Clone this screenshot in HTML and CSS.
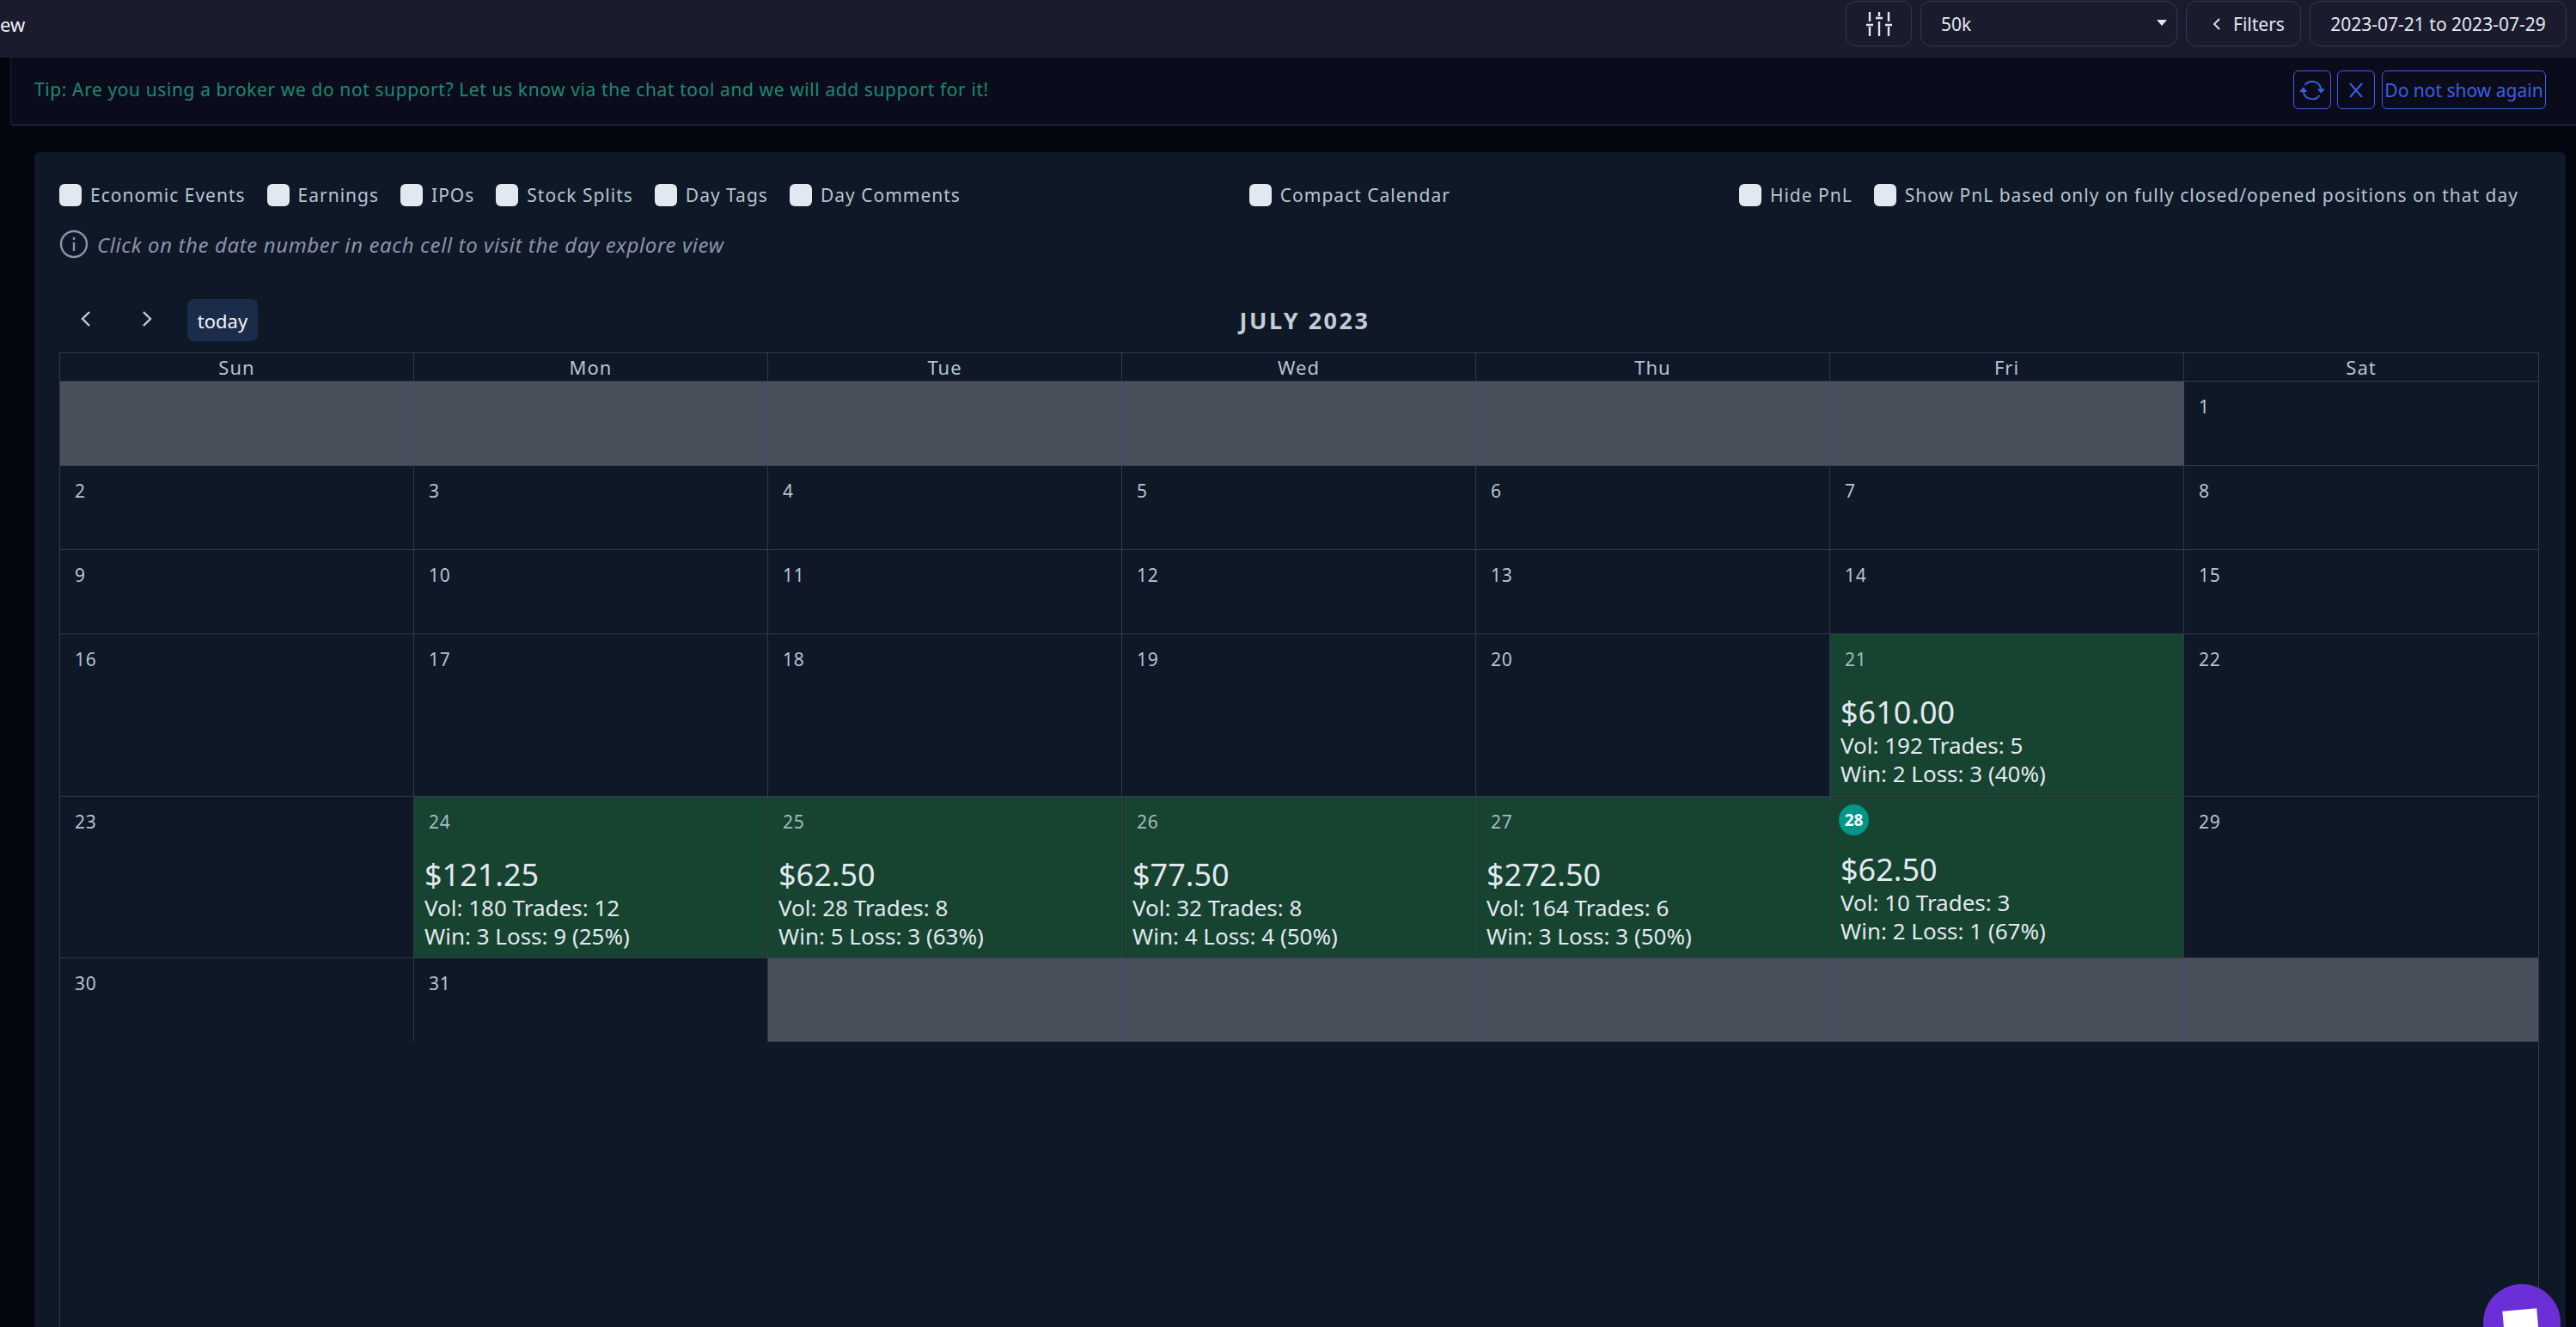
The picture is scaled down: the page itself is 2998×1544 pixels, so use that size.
FILE: index.html
```html
<!DOCTYPE html>
<html lang="en">
<head>
    <meta charset="UTF-8">
    <title>Calendar</title>
    <link rel="stylesheet" href="styles.css">
</head>
<body>
    <header class="topbar">
        <div class="page-title">ew</div>
        <div class="top-actions">
            <button class="top-btn icon-btn">
                <svg width="30" height="30" viewBox="0 0 30 30" fill="none" stroke="#e4e6ee" stroke-width="2.4">
                    <path d="M4 1v11M15 1v5M26 1v11M4 18v11M15 12v17M26 18v11"/>
                    <path d="M0 16h8M11 8h8M22 16h8"/>
                </svg>
            </button>
            <div class="top-btn select-btn"><span>50k</span><span class="caret"></span></div>
            <button class="top-btn filters-btn">
                <svg width="10" height="16" viewBox="0 0 10 16" fill="none" stroke="#e4e6ee" stroke-width="1.8"><path d="M8 2 2 8l6 6"/></svg>
                <span>Filters</span>
            </button>
            <button class="top-btn date-btn">2023-07-21 to 2023-07-29</button>
        </div>
    </header>

    <main class="content">
        <div class="tip">
            <div class="tip-text"><span class="tip-label">Tip:</span> Are you using a broker we do not support? Let us know via the chat tool and we will add support for it!</div>
            <div class="tip-actions">
                <button class="tip-btn square">
                    <svg width="30" height="30" viewBox="0 0 16 16" fill="#3f5fe0">
                        <path d="M11.534 7h3.932a.25.25 0 0 1 .192.41l-1.966 2.36a.25.25 0 0 1-.384 0l-1.966-2.36a.25.25 0 0 1 .192-.41zm-11 2h3.932a.25.25 0 0 0 .192-.41L2.692 6.23a.25.25 0 0 0-.384 0L.342 8.59A.25.25 0 0 0 .534 9z"/>
                        <path fill-rule="evenodd" d="M8 3c-1.552 0-2.94.707-3.857 1.818a.5.5 0 1 1-.771-.636A6.002 6.002 0 0 1 13.917 7H12.9A5.002 5.002 0 0 0 8 3zM3.1 9a5.002 5.002 0 0 0 8.757 2.182.5.5 0 1 1 .771.636A6.002 6.002 0 0 1 2.083 9H3.1z"/>
                    </svg>
                </button>
                <button class="tip-btn square">
                    <svg width="20" height="20" viewBox="0 0 20 20" fill="none" stroke="#3f5fe0" stroke-width="2"><path d="M3 2l14 16M17 2 3 18"/></svg>
                </button>
                <button class="tip-btn wide">Do not show again</button>
            </div>
        </div>

        <section class="card">
            <div class="options">
                <div class="option-group">
                    <label class="option"><span class="check"></span>Economic Events</label>
                    <label class="option"><span class="check"></span>Earnings</label>
                    <label class="option"><span class="check"></span>IPOs</label>
                    <label class="option"><span class="check"></span>Stock Splits</label>
                    <label class="option"><span class="check"></span>Day Tags</label>
                    <label class="option"><span class="check"></span>Day Comments</label>
                </div>
                <div class="option-group">
                    <label class="option"><span class="check"></span>Compact Calendar</label>
                </div>
                <div class="option-group">
                    <label class="option"><span class="check"></span>Hide PnL</label>
                    <label class="option"><span class="check"></span>Show PnL based only on fully closed/opened positions on that day</label>
                </div>
            </div>
            <div class="hint">
                <svg width="34" height="34" viewBox="0 0 34 34" fill="none" stroke="#8b93a9" stroke-width="2.4">
                    <circle cx="17" cy="17" r="15"/>
                    <path d="M17 15v10"/>
                    <path d="M17 9v3"/>
                </svg>
                <span>Click on the date number in each cell to visit the day explore view</span>
            </div>

            <div class="cal-nav">
                <div class="cal-buttons">
                    <button class="nav-btn"><svg width="14" height="20" viewBox="0 0 14 20" fill="none" stroke="#c3cbd6" stroke-width="2.4"><path d="M11 2 3 10l8 8"/></svg></button>
                    <button class="nav-btn"><svg width="14" height="20" viewBox="0 0 14 20" fill="none" stroke="#c3cbd6" stroke-width="2.4"><path d="M3 2l8 8-8 8"/></svg></button>
                    <button class="today-btn">today</button>
                </div>
                <h2 class="cal-title">JULY 2023</h2>
            </div>

            <div class="calendar">
                <div class="cal-grid">
                    <div class="head">Sun</div><div class="head">Mon</div><div class="head">Tue</div><div class="head">Wed</div><div class="head">Thu</div><div class="head">Fri</div><div class="head">Sat</div>

                    <div class="day off"></div><div class="day off"></div><div class="day off"></div><div class="day off"></div><div class="day off"></div><div class="day off"></div>
                    <div class="day"><span class="num">1</span></div>

                    <div class="day"><span class="num">2</span></div><div class="day"><span class="num">3</span></div><div class="day"><span class="num">4</span></div><div class="day"><span class="num">5</span></div><div class="day"><span class="num">6</span></div><div class="day"><span class="num">7</span></div><div class="day"><span class="num">8</span></div>

                    <div class="day"><span class="num">9</span></div><div class="day"><span class="num">10</span></div><div class="day"><span class="num">11</span></div><div class="day"><span class="num">12</span></div><div class="day"><span class="num">13</span></div><div class="day"><span class="num">14</span></div><div class="day"><span class="num">15</span></div>

                    <div class="day"><span class="num">16</span></div><div class="day"><span class="num">17</span></div><div class="day"><span class="num">18</span></div><div class="day"><span class="num">19</span></div><div class="day"><span class="num">20</span></div>
                    <div class="day win">
                        <span class="num">21</span>
                        <div class="pnl">$610.00</div>
                        <div class="stat">Vol: 192 Trades: 5</div>
                        <div class="stat">Win: 2 Loss: 3 (40%)</div>
                    </div>
                    <div class="day"><span class="num">22</span></div>

                    <div class="day"><span class="num">23</span></div>
                    <div class="day win">
                        <span class="num">24</span>
                        <div class="pnl">$121.25</div>
                        <div class="stat">Vol: 180 Trades: 12</div>
                        <div class="stat">Win: 3 Loss: 9 (25%)</div>
                    </div>
                    <div class="day win">
                        <span class="num">25</span>
                        <div class="pnl">$62.50</div>
                        <div class="stat">Vol: 28 Trades: 8</div>
                        <div class="stat">Win: 5 Loss: 3 (63%)</div>
                    </div>
                    <div class="day win">
                        <span class="num">26</span>
                        <div class="pnl">$77.50</div>
                        <div class="stat">Vol: 32 Trades: 8</div>
                        <div class="stat">Win: 4 Loss: 4 (50%)</div>
                    </div>
                    <div class="day win">
                        <span class="num">27</span>
                        <div class="pnl">$272.50</div>
                        <div class="stat">Vol: 164 Trades: 6</div>
                        <div class="stat">Win: 3 Loss: 3 (50%)</div>
                    </div>
                    <div class="day win">
                        <span class="today-num">28</span>
                        <div class="pnl">$62.50</div>
                        <div class="stat">Vol: 10 Trades: 3</div>
                        <div class="stat">Win: 2 Loss: 1 (67%)</div>
                    </div>
                    <div class="day"><span class="num">29</span></div>

                    <div class="day last"><span class="num">30</span></div><div class="day last"><span class="num">31</span></div>
                    <div class="day off last"></div><div class="day off last"></div><div class="day off last"></div><div class="day off last"></div><div class="day off last"></div>
                </div>
            </div>
        </section>
    </main>

    <div class="chat-widget"><span class="chat-square"></span></div>
</body>
</html>
```

FILE: styles.css
```css
* {
    box-sizing: border-box;
}
html, body {
    height: 100%;
}
body {
    margin: 0;
    height: 1544px;
    overflow: hidden;
    display: flex;
    flex-direction: column;
    background: #03050f;
    color: #e4e6ee;
    font-family: 'Noto Sans', 'Open Sans', sans-serif;
}
button {
    font-family: inherit;
    cursor: pointer;
}

/* top bar */
.topbar {
    height: 67px;
    flex: none;
    display: flex;
    justify-content: space-between;
    background: #1a1c2e;
    padding: 1px 11px 0 0;
}
.page-title {
    font-size: 22px;
    line-height: 54px;
    color: #f0f1f5;
    margin-top: 0;
}
.top-actions {
    display: flex;
    height: 53px;
    gap: 10px;
}
.top-btn {
    display: flex;
    align-items: center;
    height: 53px;
    background: #1a1c2e;
    border: 1px solid #35374f;
    border-radius: 12px;
    color: #e4e6ee;
    font-size: 21px;
}
.icon-btn {
    width: 77px;
    justify-content: center;
    padding: 0;
}
.select-btn {
    width: 299px;
    justify-content: space-between;
    padding: 0 11px 0 23px;
}
.caret {
    border: 6px solid transparent;
    border-top: 7px solid #e4e6ee;
    border-bottom: 0;
    margin: 0 0 2px;
}
.filters-btn {
    width: 134px;
    gap: 14px;
    padding: 0 0 0 30px;
}
.date-btn {
    width: 299px;
    justify-content: center;
    padding: 0;
}

/* page under bar */
.content {
    flex: 1;
    display: flex;
    flex-direction: column;
    min-height: 0;
    padding-left: 12px;
}
.tip {
    height: 79px;
    flex: none;
    display: flex;
    justify-content: space-between;
    background: #0a0c1c;
    border-left: 1px solid #1f2238;
    border-bottom: 1px solid #35374f;
    border-bottom-left-radius: 4px;
    padding: 15px 35px 0 27px;
}
.tip-text {
    font-size: 21px;
    line-height: 44px;
    color: #1c8a72;
    letter-spacing: 0.6px;
}
.tip-actions {
    display: flex;
    gap: 7px;
    height: 45px;
}
.tip-btn {
    height: 45px;
    background: transparent;
    border: 1px solid #3f5fe0;
    border-radius: 6px;
    color: #3f5fe0;
    padding: 0;
    display: flex;
    align-items: center;
    justify-content: center;
}
.tip-btn.square {
    width: 44px;
}
.tip-btn.wide {
    width: 191px;
    margin-left: 1px;
    font-size: 21px;
}

/* calendar card */
.card {
    flex: 1;
    min-height: 0;
    display: flex;
    flex-direction: column;
    margin: 31px 12px 0 28px;
    padding: 37px 31px 0 29px;
    background: #0f1826;
    border-radius: 6px 6px 0 0;
}
.options {
    display: flex;
    justify-content: space-between;
    padding-right: 24px;
    height: 26px;
}
.option-group {
    display: flex;
    gap: 25px;
}
.option {
    display: flex;
    align-items: center;
    gap: 10px;
    font-size: 21px;
    letter-spacing: 1px;
    color: #b6c4d0;
    white-space: nowrap;
}
.check {
    width: 26px;
    height: 26px;
    flex: none;
    background: #e2e8f0;
    border-radius: 6px;
}
.hint {
    display: flex;
    align-items: center;
    gap: 10px;
    height: 34px;
    margin-top: 27px;
    font-size: 24px;
    font-style: italic;
    letter-spacing: 0.6px;
    color: #8b93a9;
}
.cal-nav {
    position: relative;
    display: flex;
    align-items: center;
    height: 49px;
    margin-top: 47px;
}
.cal-buttons {
    display: flex;
    align-items: center;
    gap: 9px;
}
.nav-btn {
    width: 62px;
    height: 49px;
    background: transparent;
    border: 0;
    padding: 0;
}
.today-btn {
    width: 82px;
    height: 49px;
    margin-left: 7px;
    padding: 0;
    background: #1a2c4a;
    border: 0;
    border-radius: 8px;
    color: #f0f3f7;
    font-size: 22px;
}
.cal-title {
    flex: 1;
    margin: 0 0 0 -218px;
    text-align: center;
    font-size: 27px;
    font-weight: 700;
    letter-spacing: 2.5px;
    color: #c5ccd6;
}
.calendar {
    flex: 1;
    margin-top: 13px;
    border-left: 1px solid #35374f;
    border-right: 1px solid #35374f;
}
.cal-grid {
    display: grid;
    grid-template-columns: repeat(7, 1fr);
    grid-template-rows: 33px 98px 51px 51px 98px 98px 96px;
    grid-template-rows: 33px 98px 98px 98px 189px 188px 97px;
    border-top: 1px solid #35374f;
}
.head {
    display: flex;
    align-items: center;
    justify-content: center;
    font-size: 22px;
    letter-spacing: 1px;
    color: #b6c4d0;
    border-right: 1px solid #35374f;
    border-bottom: 1px solid #35374f;
}
.day {
    padding: 0 12px;
    border-right: 1px solid #35374f;
    border-bottom: 1px solid #35374f;
    overflow: hidden;
}
.day.off {
    background: #4a505b;
    border-color: #43466a;
}
.day.win {
    background: #174430;
}
.day.last {
    border-bottom: 0;
}
.head:nth-child(7), .day:nth-child(7n) {
    border-right: 0;
}
.num {
    display: block;
    height: 37px;
    margin: 14px 0 0 5px;
    font-size: 21px;
    line-height: 30px;
    letter-spacing: 0.8px;
    color: #b6c4d0;
}
.win .num {
    color: #a4bdc0;
}
.today-num {
    display: flex;
    align-items: center;
    justify-content: center;
    width: 35px;
    height: 36px;
    margin: 9px 0 6px -2px;
    background: #009688;
    border-radius: 50%;
    color: #fff;
    font-size: 19px;
    font-weight: 700;
}
.pnl {
    margin-top: 18px;
    font-size: 36px;
    line-height: 44px;
    color: #e2e8f0;
}
.stat {
    font-size: 26px;
    line-height: 33px;
    color: #e2e8f0;
}

/* chat bubble, fixed over the page */
.chat-widget {
    position: fixed;
    left: 2890px;
    top: 1494px;
    width: 90px;
    height: 90px;
    border-radius: 50%;
    background: #6a2fd6;
}
.chat-square {
    position: absolute;
    left: 24px;
    top: 30px;
    width: 40px;
    height: 40px;
    background: #fff;
    transform: rotate(-5deg);
}
```
